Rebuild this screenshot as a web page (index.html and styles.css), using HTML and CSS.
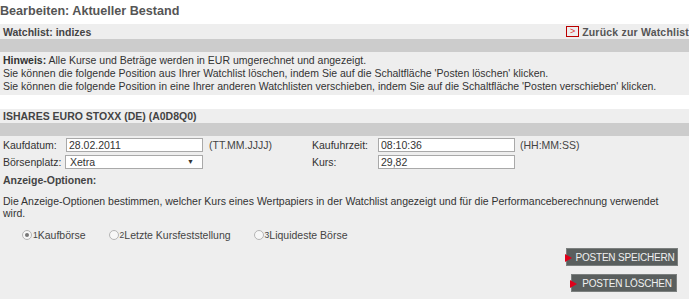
FILE: index.html
```html
<!DOCTYPE html>
<html>
<head>
  <title>Bearbeiten: Aktueller Bestand</title>
  <link rel="stylesheet" href="styles.css">
</head>
<body>
  <div class="page">
    <h1 class="title">Bearbeiten: Aktueller Bestand</h1>

    <div class="bar">
      <span>Watchlist: indizes</span>
      <a href="#" class="back-link"><span class="back-icon">&gt;</span>Zurück zur Watchlist</a>
    </div>
    <div class="bar-dark"></div>

    <div class="note">
      <b>Hinweis:</b> Alle Kurse und Beträge werden in EUR umgerechnet und angezeigt.<br>
      Sie können die folgende Position aus Ihrer Watchlist löschen, indem Sie auf die Schaltfläche 'Posten löschen' klicken.<br>
      Sie können die folgende Position in eine Ihrer anderen Watchlisten verschieben, indem Sie auf die Schaltfläche 'Posten verschieben' klicken.
    </div>

    <div class="bar section-bar">
      <span>ISHARES EURO STOXX (DE) (A0D8Q0)</span>
    </div>
    <div class="bar-dark"></div>

    <div class="form">
      <div class="form-grid">
        <label>Kaufdatum:</label>
        <input type="text" class="field" value="28.02.2011">
        <span class="hint">(TT.MM.JJJJ)</span>
        <label>Kaufuhrzeit:</label>
        <input type="text" class="field" value="08:10:36">
        <span class="hint">(HH:MM:SS)</span>

        <label>Börsenplatz:</label>
        <div class="select">Xetra<span class="select-arrow">&#9660;</span></div>
        <span></span>
        <label>Kurs:</label>
        <input type="text" class="field" value="29,82">
        <span></span>
      </div>

      <h3 class="options-title">Anzeige-Optionen:</h3>
      <p class="options-text">Die Anzeige-Optionen bestimmen, welcher Kurs eines Wertpapiers in der Watchlist angezeigt und für die Performanceberechnung verwendet wird.</p>

      <div class="radios">
        <span class="radio-item"><span class="radio checked"></span><sup>1</sup>Kaufbörse</span>
        <span class="radio-item"><span class="radio"></span><sup>2</sup>Letzte Kursfeststellung</span>
        <span class="radio-item"><span class="radio"></span><sup>3</sup>Liquideste Börse</span>
      </div>

      <div class="actions">
        <button class="action-button">POSTEN SPEICHERN</button>
        <button class="action-button small">POSTEN LÖSCHEN</button>
      </div>
    </div>
  </div>
</body>
</html>
```

FILE: styles.css
```css
html {
  overflow: hidden;
}

body {
  margin: 0;
  background: #fff;
  font-family: "Liberation Sans", Arial, sans-serif;
  font-size: 10.5px;
  color: #333;
}

.page {
  width: 695px;
}

.title {
  margin: 0;
  height: 24px;
  line-height: 22px;
  font-size: 12.6px;
  font-weight: bold;
  color: #555;
}

.bar {
  display: flex;
  justify-content: space-between;
  align-items: center;
  height: 15px;
  padding: 0 6px 0 3px;
  background: #eee;
  font-weight: bold;
  color: #444;
}

.bar-dark {
  height: 13px;
  background: #ccc;
}

.back-link {
  display: flex;
  align-items: center;
  color: #555;
  text-decoration: none;
  letter-spacing: 0.2px;
}

.back-icon {
  display: inline-block;
  width: 11px;
  height: 9px;
  margin-right: 3px;
  border: 1px solid #b00;
  color: #d33;
  font-size: 9px;
  font-weight: normal;
  line-height: 9px;
  text-align: center;
  letter-spacing: 0;
}

.note {
  padding: 2px 3px 2px;
  line-height: 13px;
  background: #eee;
}

.section-bar {
  margin-top: 14px;
  height: 14px;
}

.form {
  background: #eee;
  padding: 2px 0 8px;
}

.form-grid {
  display: grid;
  grid-template-columns: 63px 143px 103px 66px 142px auto;
  row-gap: 3px;
  align-items: center;
  padding-left: 3px;
}

.form-grid label {
  color: #333;
}

.field,
.select {
  box-sizing: border-box;
  width: 137px;
  height: 14px;
  margin: 0;
  padding: 0 2px;
  border: 1px solid #a9a9a9;
  background: #fff;
  font-family: "Liberation Sans", Arial, sans-serif;
  font-size: 10.5px;
  color: #333;
  line-height: 12px;
}

.select {
  position: relative;
  width: 138px;
  margin-left: -1px;
  padding-left: 4px;
}

.select-arrow {
  position: absolute;
  right: 8px;
  top: 0;
  font-size: 7px;
  color: #333;
}

.hint {
  color: #444;
}

.options-title {
  margin: 5px 0 0;
  padding-left: 3px;
  font-size: 10.5px;
  font-weight: bold;
  color: #444;
  line-height: 13px;
}

.options-text {
  margin: 8px 0 0;
  padding: 0 16px 0 3px;
  line-height: 12px;
}

.radios {
  display: flex;
  gap: 23px;
  margin-top: 10px;
  padding-left: 22px;
  color: #444;
}

.radio-item {
  display: flex;
  align-items: center;
}

.radio-item sup {
  font-size: 8.5px;
  vertical-align: 3px;
  line-height: 0;
  margin-left: 1px;
}

.radio {
  box-sizing: border-box;
  width: 10px;
  height: 10px;
  border: 1px solid #b5b5b5;
  border-radius: 50%;
  background: #f7f7f7;
  position: relative;
}

.radio.checked::after {
  content: "";
  position: absolute;
  left: 2px;
  top: 2px;
  width: 4px;
  height: 4px;
  border-radius: 50%;
  background: #777;
}

.actions {
  display: flex;
  flex-direction: column;
  align-items: flex-end;
  gap: 8px;
  margin-top: 7px;
  padding-right: 17px;
}

.action-button {
  position: relative;
  box-sizing: border-box;
  width: 112px;
  height: 18px;
  padding: 0 0 0 6px;
  border: 1px solid #7c807f;
  background: #5a5f5e;
  font-family: "Liberation Sans", Arial, sans-serif;
  font-size: 10px;
  letter-spacing: -0.2px;
  white-space: nowrap;
  color: #f0f0f0;
  text-align: center;
}

.action-button.small {
  width: 106px;
  margin-right: 1px;
}

.action-button::before {
  content: "";
  position: absolute;
  left: -2px;
  top: 5px;
  border-left: 7px solid #e0001a;
  border-top: 4px solid transparent;
  border-bottom: 4px solid transparent;
}
```
